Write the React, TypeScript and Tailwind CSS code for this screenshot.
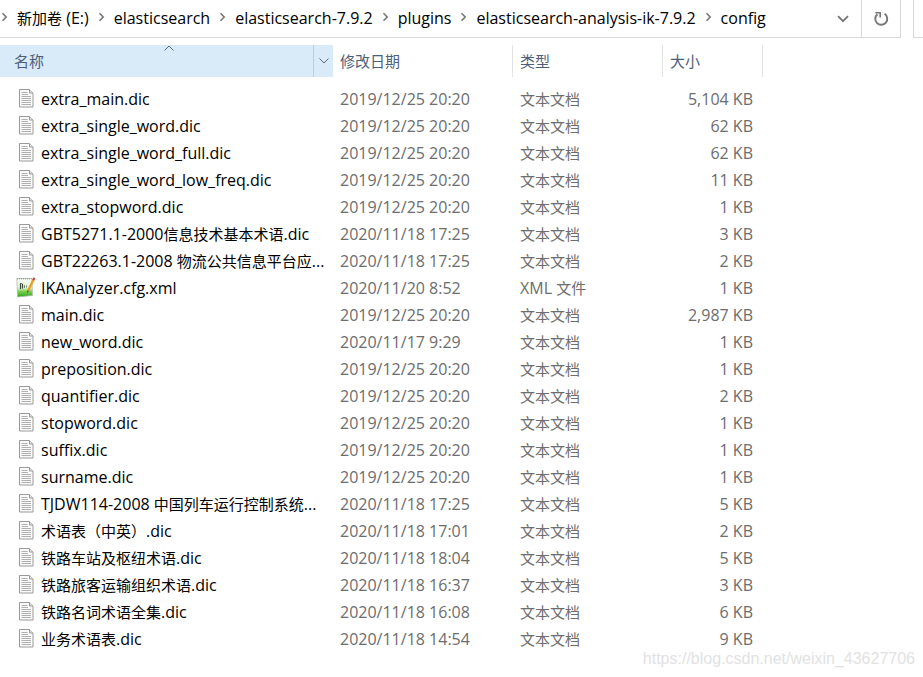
import { Fragment } from "react";

type FileItem = {
  name: string;
  modified: string;
  type: string;
  size: string;
};

const breadcrumbs = [
  "新加卷 (E:)",
  "elasticsearch",
  "elasticsearch-7.9.2",
  "plugins",
  "elasticsearch-analysis-ik-7.9.2",
  "config",
];

const TEXT = "文本文档";

const files: FileItem[] = [
  { name: "extra_main.dic", modified: "2019/12/25 20:20", type: TEXT, size: "5,104 KB" },
  { name: "extra_single_word.dic", modified: "2019/12/25 20:20", type: TEXT, size: "62 KB" },
  { name: "extra_single_word_full.dic", modified: "2019/12/25 20:20", type: TEXT, size: "62 KB" },
  { name: "extra_single_word_low_freq.dic", modified: "2019/12/25 20:20", type: TEXT, size: "11 KB" },
  { name: "extra_stopword.dic", modified: "2019/12/25 20:20", type: TEXT, size: "1 KB" },
  { name: "GBT5271.1-2000信息技术基本术语.dic", modified: "2020/11/18 17:25", type: TEXT, size: "3 KB" },
  { name: "GBT22263.1-2008 物流公共信息平台应...", modified: "2020/11/18 17:25", type: TEXT, size: "2 KB" },
  { name: "IKAnalyzer.cfg.xml", modified: "2020/11/20 8:52", type: "XML 文件", size: "1 KB" },
  { name: "main.dic", modified: "2019/12/25 20:20", type: TEXT, size: "2,987 KB" },
  { name: "new_word.dic", modified: "2020/11/17 9:29", type: TEXT, size: "1 KB" },
  { name: "preposition.dic", modified: "2019/12/25 20:20", type: TEXT, size: "1 KB" },
  { name: "quantifier.dic", modified: "2019/12/25 20:20", type: TEXT, size: "2 KB" },
  { name: "stopword.dic", modified: "2019/12/25 20:20", type: TEXT, size: "1 KB" },
  { name: "suffix.dic", modified: "2019/12/25 20:20", type: TEXT, size: "1 KB" },
  { name: "surname.dic", modified: "2019/12/25 20:20", type: TEXT, size: "1 KB" },
  { name: "TJDW114-2008 中国列车运行控制系统...", modified: "2020/11/18 17:25", type: TEXT, size: "5 KB" },
  { name: "术语表（中英）.dic", modified: "2020/11/18 17:01", type: TEXT, size: "2 KB" },
  { name: "铁路车站及枢纽术语.dic", modified: "2020/11/18 18:04", type: TEXT, size: "5 KB" },
  { name: "铁路旅客运输组织术语.dic", modified: "2020/11/18 16:37", type: TEXT, size: "3 KB" },
  { name: "铁路名词术语全集.dic", modified: "2020/11/18 16:08", type: TEXT, size: "6 KB" },
  { name: "业务术语表.dic", modified: "2020/11/18 14:54", type: TEXT, size: "9 KB" },
];

// Latin runs are set one size larger than the Chinese ones
function MixedText({ text }: { text: string }) {
  return (
    <span className="whitespace-pre">
      {text.split(/([ -~]+)/).map((part, i) =>
        i % 2 === 1 ? (
          <span key={i} className="text-base leading-none">
            {part}
          </span>
        ) : (
          part
        )
      )}
    </span>
  );
}

function CrumbArrow() {
  return (
    <svg width="7" height="10" viewBox="0 0 7 10" className="mb-1 shrink-0" aria-hidden="true">
      <path d="M1.5 1.2L5.2 5L1.5 8.8" fill="none" stroke="#767676" strokeWidth="1.6" />
    </svg>
  );
}

function TextFileIcon() {
  return (
    <svg width="15" height="19" viewBox="0 0 15 19" aria-hidden="true">
      <path d="M0.5 0.5H10.5L14 4V18H0.5Z" fill="#fafafa" stroke="#9a9a9a" />
      <path d="M10.5 0.5V4H14" fill="#e6e6e6" stroke="#9a9a9a" />
      <path
        d="M2.5 3.5H8.5M2.5 5.5H9M2.5 7.5H12M2.5 9.5H12M2.5 11.5H12M2.5 13.5H12M2.5 15.5H12"
        stroke="#b0b0b0"
      />
    </svg>
  );
}

function XmlFileIcon() {
  return (
    <svg width="20" height="21" viewBox="0 0 20 21" aria-hidden="true">
      <defs>
        <linearGradient id="xml-page" x1="0" y1="0" x2="0" y2="1">
          <stop offset="0" stopColor="#fafcf8" />
          <stop offset="0.5" stopColor="#e2f2d6" />
          <stop offset="0.7" stopColor="#7bd04f" />
          <stop offset="1" stopColor="#2ba31c" />
        </linearGradient>
      </defs>
      <path d="M0.8 1.5H16L16.5 18.5L1.5 20Z" fill="url(#xml-page)" stroke="#b3bcae" strokeWidth="0.8" />
      <path d="M1 1.8H15.5" stroke="#8b8b8b" strokeDasharray="1 1" />
      <path d="M4.5 6V12M6.5 7V11.5" stroke="#3a4a36" strokeWidth="1.2" />
      <path d="M4.5 6.5H6.5M8.5 8V11M10.5 8.5V10.5" stroke="#7d8a78" />
      <path d="M17.3 3L12 14" stroke="#e8a225" strokeWidth="2.4" />
      <path d="M18.4 0.8L17.2 3.2" stroke="#c95045" strokeWidth="2.4" />
      <path d="M12.3 13.4L11.2 15.6" stroke="#5c4526" strokeWidth="1.2" />
    </svg>
  );
}

function AddressBar() {
  return (
    <header className="flex h-[38px] gap-3">
      <div className="flex min-w-0 flex-1 border-r border-b border-[#d9d9d9]">
        <nav className="flex min-w-0 flex-1 items-center gap-[9px] pl-px whitespace-nowrap text-black">
          {breadcrumbs.map((crumb) => (
            <Fragment key={crumb}>
              <CrumbArrow />
              <a href="#">
                <MixedText text={crumb} />
              </a>
            </Fragment>
          ))}
        </nav>
        <button type="button" aria-label="Previous locations" className="flex w-9 items-center justify-center">
          <svg width="12" height="8" viewBox="0 0 12 8" aria-hidden="true">
            <path d="M1 1.2L6 6.2L11 1.2" fill="none" stroke="#767676" strokeWidth="1.8" />
          </svg>
        </button>
        <button
          type="button"
          aria-label="Refresh"
          className="flex w-[39px] items-center justify-center border-l border-[#d9d9d9]"
        >
          <svg width="16" height="16" viewBox="0 0 16 16" aria-hidden="true">
            <path d="M11.6 2.8A6 6 0 1 1 4.4 3.2" fill="none" stroke="#767676" strokeWidth="1.9" />
            <path d="M2.4 1.7H7.2V6.4" fill="none" stroke="#767676" strokeWidth="1.6" />
          </svg>
        </button>
      </div>
      <div className="w-[10px] border-b border-l border-[#d9d9d9]" />
    </header>
  );
}

export default function App() {
  return (
    <div className="relative overflow-hidden bg-white pb-6 font-['Open_Sans','Noto_Sans_CJK_SC',sans-serif] text-[15px]">
      <AddressBar />

      <table className="mt-[7px] table-fixed border-collapse">
        <colgroup>
          <col className="w-[333px]" />
          <col className="w-[180px]" />
          <col className="w-[150px]" />
          <col className="w-[100px]" />
        </colgroup>
        <thead className="text-[#4c607a]">
          <tr>
            <th className="p-0 pb-[9px] text-left font-normal">
              <div className="relative flex h-8 bg-[#d9ebf9]">
                <button type="button" className="flex-1 pl-[14px] text-left">
                  名称
                </button>
                <button
                  type="button"
                  aria-label="Filter"
                  className="flex w-5 items-center justify-center border-l border-[#b9cfe0]"
                >
                  <svg width="10" height="6" viewBox="0 0 10 6" aria-hidden="true">
                    <path d="M0.5 0.5L5 5L9.5 0.5" fill="none" stroke="#5c6b7a" />
                  </svg>
                </button>
                <div className="absolute inset-x-0 top-0 flex justify-center pl-1">
                  <svg width="10" height="6" viewBox="0 0 10 6" aria-hidden="true">
                    <path d="M0.5 5.5L5 1L9.5 5.5" fill="none" stroke="#5c6b7a" />
                  </svg>
                </div>
              </div>
            </th>
            <th className="p-0 pb-[9px] text-left font-normal">
              <button type="button" className="block h-8 w-full border-r border-[#e2e2e2] pl-[7px] text-left">
                修改日期
              </button>
            </th>
            <th className="p-0 pb-[9px] text-left font-normal">
              <button type="button" className="block h-8 w-full border-r border-[#e2e2e2] pl-[7px] text-left">
                类型
              </button>
            </th>
            <th className="p-0 pb-[9px] text-left font-normal">
              <button type="button" className="block h-8 w-full border-r border-[#e2e2e2] pl-[7px] text-left">
                大小
              </button>
            </th>
          </tr>
        </thead>
        <tbody className="leading-[27px] whitespace-nowrap text-[#6d6d6d]">
          {files.map((file) => (
            <tr key={file.name} className="h-[27px]">
              <td className="p-0 pl-4">
                <div className="flex h-[27px] items-center gap-[5px] text-black">
                  <span className="flex w-5 shrink-0 justify-center pb-[2px]">
                    {file.name.endsWith(".xml") ? <XmlFileIcon /> : <TextFileIcon />}
                  </span>
                  <MixedText text={file.name} />
                </div>
              </td>
              <td className="p-0 pl-[7px]">
                <MixedText text={file.modified} />
              </td>
              <td className="p-0 pl-[7px]">
                <MixedText text={file.type} />
              </td>
              <td className="p-0 pr-[10px] text-right">
                <MixedText text={file.size} />
              </td>
            </tr>
          ))}
        </tbody>
      </table>

      <p className="absolute right-2 bottom-1.5 font-['Liberation_Sans',sans-serif] text-base text-[#e2e2e2]">
        https://blog.csdn.net/weixin_43627706
      </p>
    </div>
  );
}
